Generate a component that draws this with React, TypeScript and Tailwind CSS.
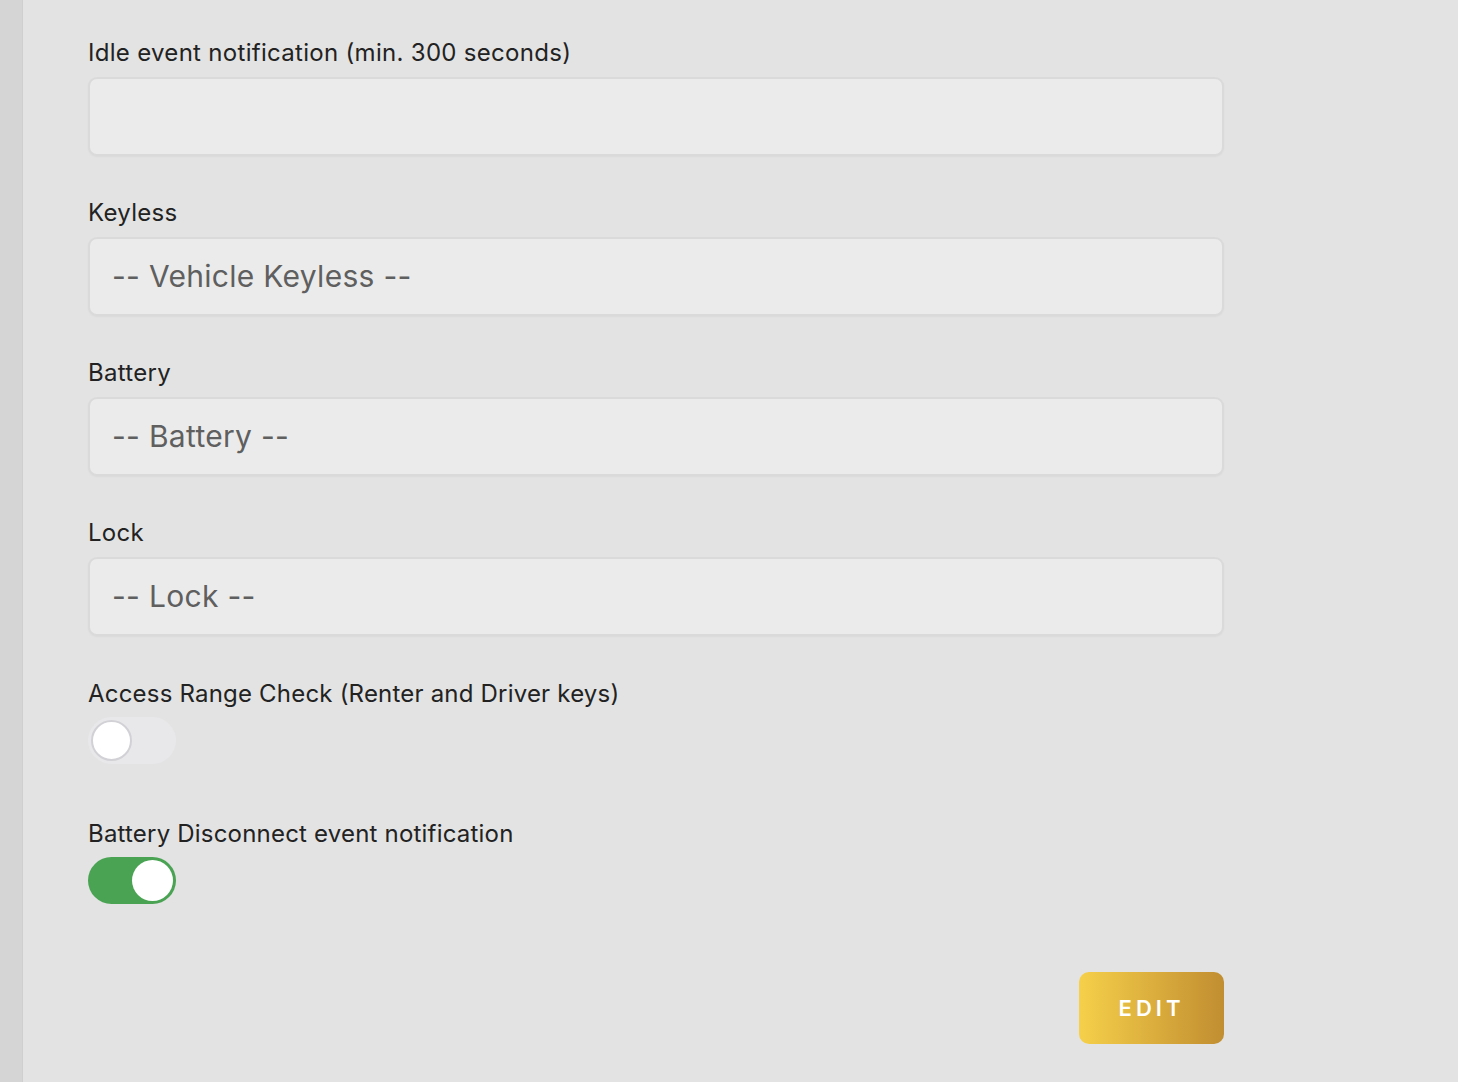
const font = { fontFamily: 'Inter, "Noto Sans", sans-serif' };

function Field({ label, placeholder }: { label: string; placeholder?: string }) {
  return (
    <div className="flex flex-col">
      <label className="h-[30px] text-[24px] leading-[30px] tracking-[0.3px] text-[#222222]">{label}</label>
      <div className="mt-[9px] flex h-[79px] items-center rounded-[9px] border-2 border-[#dadada] bg-[#ebebeb] px-[22px] shadow-[0_1px_2px_rgba(0,0,0,0.04)]">
        {placeholder && <span className="text-[30px] tracking-[0.3px] text-[#5f5f5f]">{placeholder}</span>}
      </div>
    </div>
  );
}

function Toggle({ label, on }: { label: string; on: boolean }) {
  return (
    <div className="flex flex-col">
      <label className="h-[30px] text-[24px] leading-[30px] tracking-[0.2px] text-[#222222]">{label}</label>
      <div
        className={`mt-[8px] flex h-[47px] w-[88px] items-center rounded-full p-[3px] ${
          on ? 'justify-end bg-[#4aa353]' : 'justify-start bg-[#e8e8eb]'
        }`}
      >
        <div
          className={`h-[41px] w-[41px] rounded-full bg-white ${on ? '' : 'border-2 border-[#d2d2d6]'}`}
        />
      </div>
    </div>
  );
}

export default function App() {
  return (
    <div className="flex min-h-[1082px] w-full bg-[#e3e3e3]" style={font}>
      <div className="w-[23px] shrink-0 border-r border-[#cfcfcf] bg-[#d5d5d5]" />
      <div className="flex w-[1201px] flex-col pl-[65px] pt-[38px]">
        <div className="flex flex-col gap-[42px]">
          <Field label="Idle event notification (min. 300 seconds)" />
          <Field label="Keyless" placeholder="-- Vehicle Keyless --" />
          <Field label="Battery" placeholder="-- Battery --" />
          <Field label="Lock" placeholder="-- Lock --" />
        </div>
        <div className="mt-[43px] flex flex-col gap-[55px]">
          <Toggle label="Access Range Check (Renter and Driver keys)" on={false} />
          <Toggle label="Battery Disconnect event notification" on={true} />
        </div>
        <div className="mt-[68px] flex justify-end">
          <button className="h-[72px] w-[145px] rounded-[10px] bg-gradient-to-r from-[#f6d04a] to-[#c18e31] text-[22px] font-semibold tracking-[4px] text-white">
            EDIT
          </button>
        </div>
      </div>
    </div>
  );
}
